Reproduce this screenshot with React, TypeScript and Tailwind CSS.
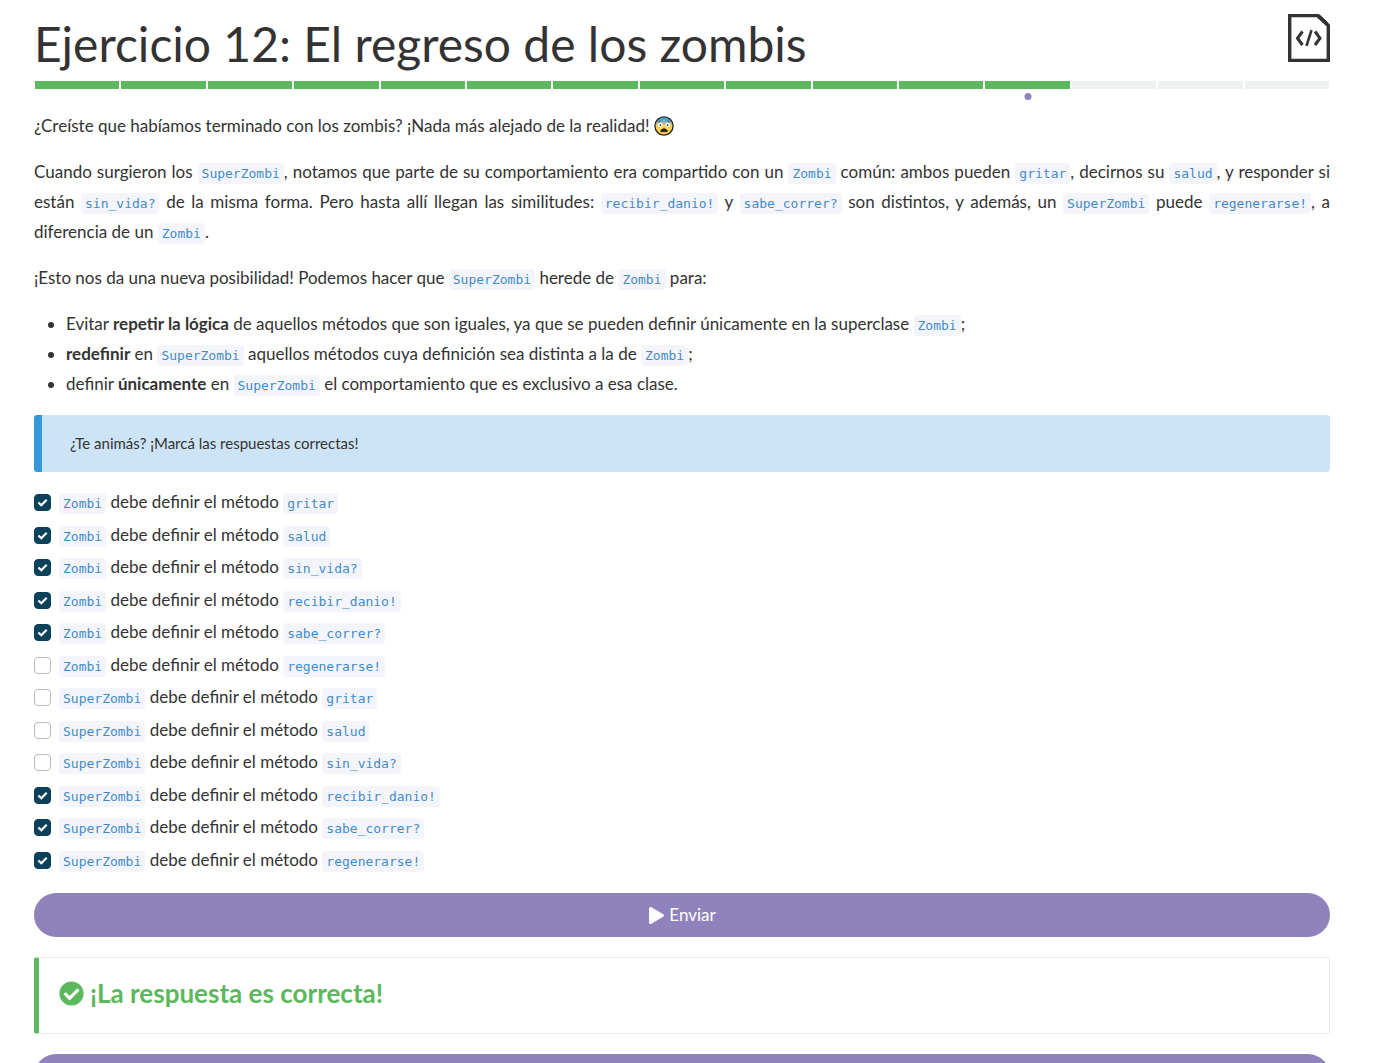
import { useState, type ReactNode } from "react";
import { FaCheckCircle, FaPlay } from "react-icons/fa";

const TOTAL_STEPS = 15;
const CURRENT_STEP = 12;

const CHOICES = [
  { cls: "Zombi", method: "gritar", checked: true },
  { cls: "Zombi", method: "salud", checked: true },
  { cls: "Zombi", method: "sin_vida?", checked: true },
  { cls: "Zombi", method: "recibir_danio!", checked: true },
  { cls: "Zombi", method: "sabe_correr?", checked: true },
  { cls: "Zombi", method: "regenerarse!", checked: false },
  { cls: "SuperZombi", method: "gritar", checked: false },
  { cls: "SuperZombi", method: "salud", checked: false },
  { cls: "SuperZombi", method: "sin_vida?", checked: false },
  { cls: "SuperZombi", method: "recibir_danio!", checked: true },
  { cls: "SuperZombi", method: "sabe_correr?", checked: true },
  { cls: "SuperZombi", method: "regenerarse!", checked: true },
];

function Code({ children }: { children: ReactNode }) {
  return (
    <code className="rounded bg-[#f4f5fb] px-1 py-[3px] font-['DejaVu_Sans_Mono',monospace] text-[13px] leading-none text-[#428bca]">
      {children}
    </code>
  );
}

function CodeFileIcon() {
  return (
    <svg viewBox="0 0 42 48" className="h-12 w-[42px] shrink-0 text-[#333]" fill="none" stroke="currentColor" aria-hidden="true">
      <path d="M1.7 1.5H30L40.3 11.5V46.4H1.7Z" strokeWidth="3.4" />
      <path d="M28 2L40 13V9L32 1.5Z" fill="currentColor" strokeWidth="1" />
      <path d="M14.5 17.5L9.5 24.2L14.5 31M27 17.5L32 24.2L27 31" strokeWidth="3" />
      <path d="M23.5 16.2L18.5 31.8" strokeWidth="2.6" />
    </svg>
  );
}

function FearfulFace() {
  return (
    <svg viewBox="0 0 20 20" className="inline-block size-5 align-[-4px]" role="img" aria-label="Cara asustada">
      <defs>
        <linearGradient id="face" x1="0" y1="0" x2="0" y2="1">
          <stop offset="0.15" stopColor="#4aa5e8" />
          <stop offset="0.5" stopColor="#ffd34e" />
        </linearGradient>
      </defs>
      <circle cx="10" cy="10" r="9.1" fill="url(#face)" stroke="#222" strokeWidth="1.3" />
      <circle cx="6.3" cy="9" r="2.3" fill="#fff" />
      <circle cx="13.7" cy="9" r="2.3" fill="#fff" />
      <circle cx="6.5" cy="9.1" r="0.9" fill="#222" />
      <circle cx="13.5" cy="9.1" r="0.9" fill="#222" />
      <path d="M4 6Q6 5.6 7.2 4.2M16 6Q14 5.6 12.8 4.2" fill="none" stroke="#222" strokeWidth="0.6" />
      <path d="M6.6 15.4C6.8 12 13.2 12 13.4 15.4C12 15.8 8 15.8 6.6 15.4Z" fill="#222" stroke="#222" strokeWidth="0.8" />
    </svg>
  );
}

function Choice({ cls, method, checked }: { cls: string; method: string; checked: boolean }) {
  const [on, setOn] = useState(checked);
  return (
    <li className="odd:mb-[3px] even:mb-[2px]">
      <label className="flex items-center gap-2 leading-[30px]">
        <span className="relative size-[17px] shrink-0">
          <input
            type="checkbox"
            checked={on}
            onChange={() => setOn(!on)}
            className="block size-[17px] appearance-none rounded border border-[#bbb] bg-white checked:border-[#0b4259] checked:bg-[#0b4259]"
          />
          {on && (
            <svg viewBox="0 0 17 17" className="pointer-events-none absolute inset-0" fill="none" stroke="#fff" strokeWidth="2.2" aria-hidden="true">
              <path d="M4.4 8.5L7.3 11.2L12.7 5.8" />
            </svg>
          )}
        </span>
        <span>
          <Code>{cls}</Code> debe definir el método <Code>{method}</Code>
        </span>
      </label>
    </li>
  );
}

export default function App() {
  return (
    <main className="h-screen overflow-hidden bg-white pr-[52px] pl-[34px] font-['Lato',sans-serif] text-[17px] leading-[30px] text-[#333]">
      <header className="flex items-start justify-between pt-[14px]">
        <h1 className="text-[48px] leading-[60px]">Ejercicio 12: El regreso de los zombis</h1>
        <CodeFileIcon />
      </header>

      <ol className="mt-[7px] mr-px ml-px flex gap-[2px]" aria-label="Progreso">
        {Array.from({ length: TOTAL_STEPS }, (_, i) => (
          <li key={i} className={i < CURRENT_STEP ? "relative h-2 flex-1 bg-[#5cb85c]" : "h-2 flex-1 bg-[#ecf0f1]"}>
            {i === CURRENT_STEP - 1 && (
              <span className="absolute top-3 left-1/2 size-[7px] -translate-x-1/2 rounded-full bg-[#9083bd]" />
            )}
          </li>
        ))}
      </ol>

      <div className="mt-[22px] flex flex-col gap-4 text-justify">
        <p>
          ¿Creíste que habíamos terminado con los zombis? ¡Nada más alejado de la realidad! <FearfulFace />
        </p>
        <p>
          Cuando surgieron los <Code>SuperZombi</Code>, notamos que parte de su comportamiento era compartido con un{" "}
          <Code>Zombi</Code> común: ambos pueden <Code>gritar</Code>, decirnos su <Code>salud</Code>, y responder si están{" "}
          <Code>sin_vida?</Code> de la misma forma. Pero hasta allí llegan las similitudes: <Code>recibir_danio!</Code> y{" "}
          <Code>sabe_correr?</Code> son distintos, y además, un <Code>SuperZombi</Code> puede <Code>regenerarse!</Code>, a
          diferencia de un <Code>Zombi</Code>.
        </p>
        <p>
          ¡Esto nos da una nueva posibilidad! Podemos hacer que <Code>SuperZombi</Code> herede de <Code>Zombi</Code> para:
        </p>
        <ul className="list-disc pl-8">
          <li>
            Evitar <strong>repetir la lógica</strong> de aquellos métodos que son iguales, ya que se pueden definir únicamente
            en la superclase <Code>Zombi</Code>;
          </li>
          <li>
            <strong>redefinir</strong> en <Code>SuperZombi</Code> aquellos métodos cuya definición sea distinta a la de{" "}
            <Code>Zombi</Code>;
          </li>
          <li>
            definir <strong>únicamente</strong> en <Code>SuperZombi</Code> el comportamiento que es exclusivo a esa clase.
          </li>
        </ul>
        <blockquote className="rounded-[3px] border-l-8 border-[#3498db] bg-[#cce4f6] py-[14px] pl-7 text-[15px] leading-[29px]">
          ¿Te animás? ¡Marcá las respuestas correctas!
        </blockquote>
      </div>

      <form onSubmit={(e) => e.preventDefault()}>
        <ul className="mt-[15px]">
          {CHOICES.map((c) => (
            <Choice key={c.cls + c.method} {...c} />
          ))}
        </ul>
        <button
          type="submit"
          className="mt-[18px] flex h-11 w-full items-center justify-center gap-1 rounded-full bg-[#9083bd] text-white"
        >
          <FaPlay className="size-[17px]" />
          Enviar
        </button>
      </form>

      <section className="mt-5 rounded-[3px] border border-l-[5px] border-[#eee] border-l-[#5cb85c] pt-[19px] pb-6 pl-5">
        <h2 className="flex items-center gap-[6px] text-[26px] leading-8 font-bold text-[#5cb85c]">
          <FaCheckCircle className="size-[25px]" />
          ¡La respuesta es correcta!
        </h2>
      </section>

      <button type="button" aria-label="Siguiente ejercicio" className="mt-5 block h-11 w-full rounded-full bg-[#9083bd]" />
    </main>
  );
}
